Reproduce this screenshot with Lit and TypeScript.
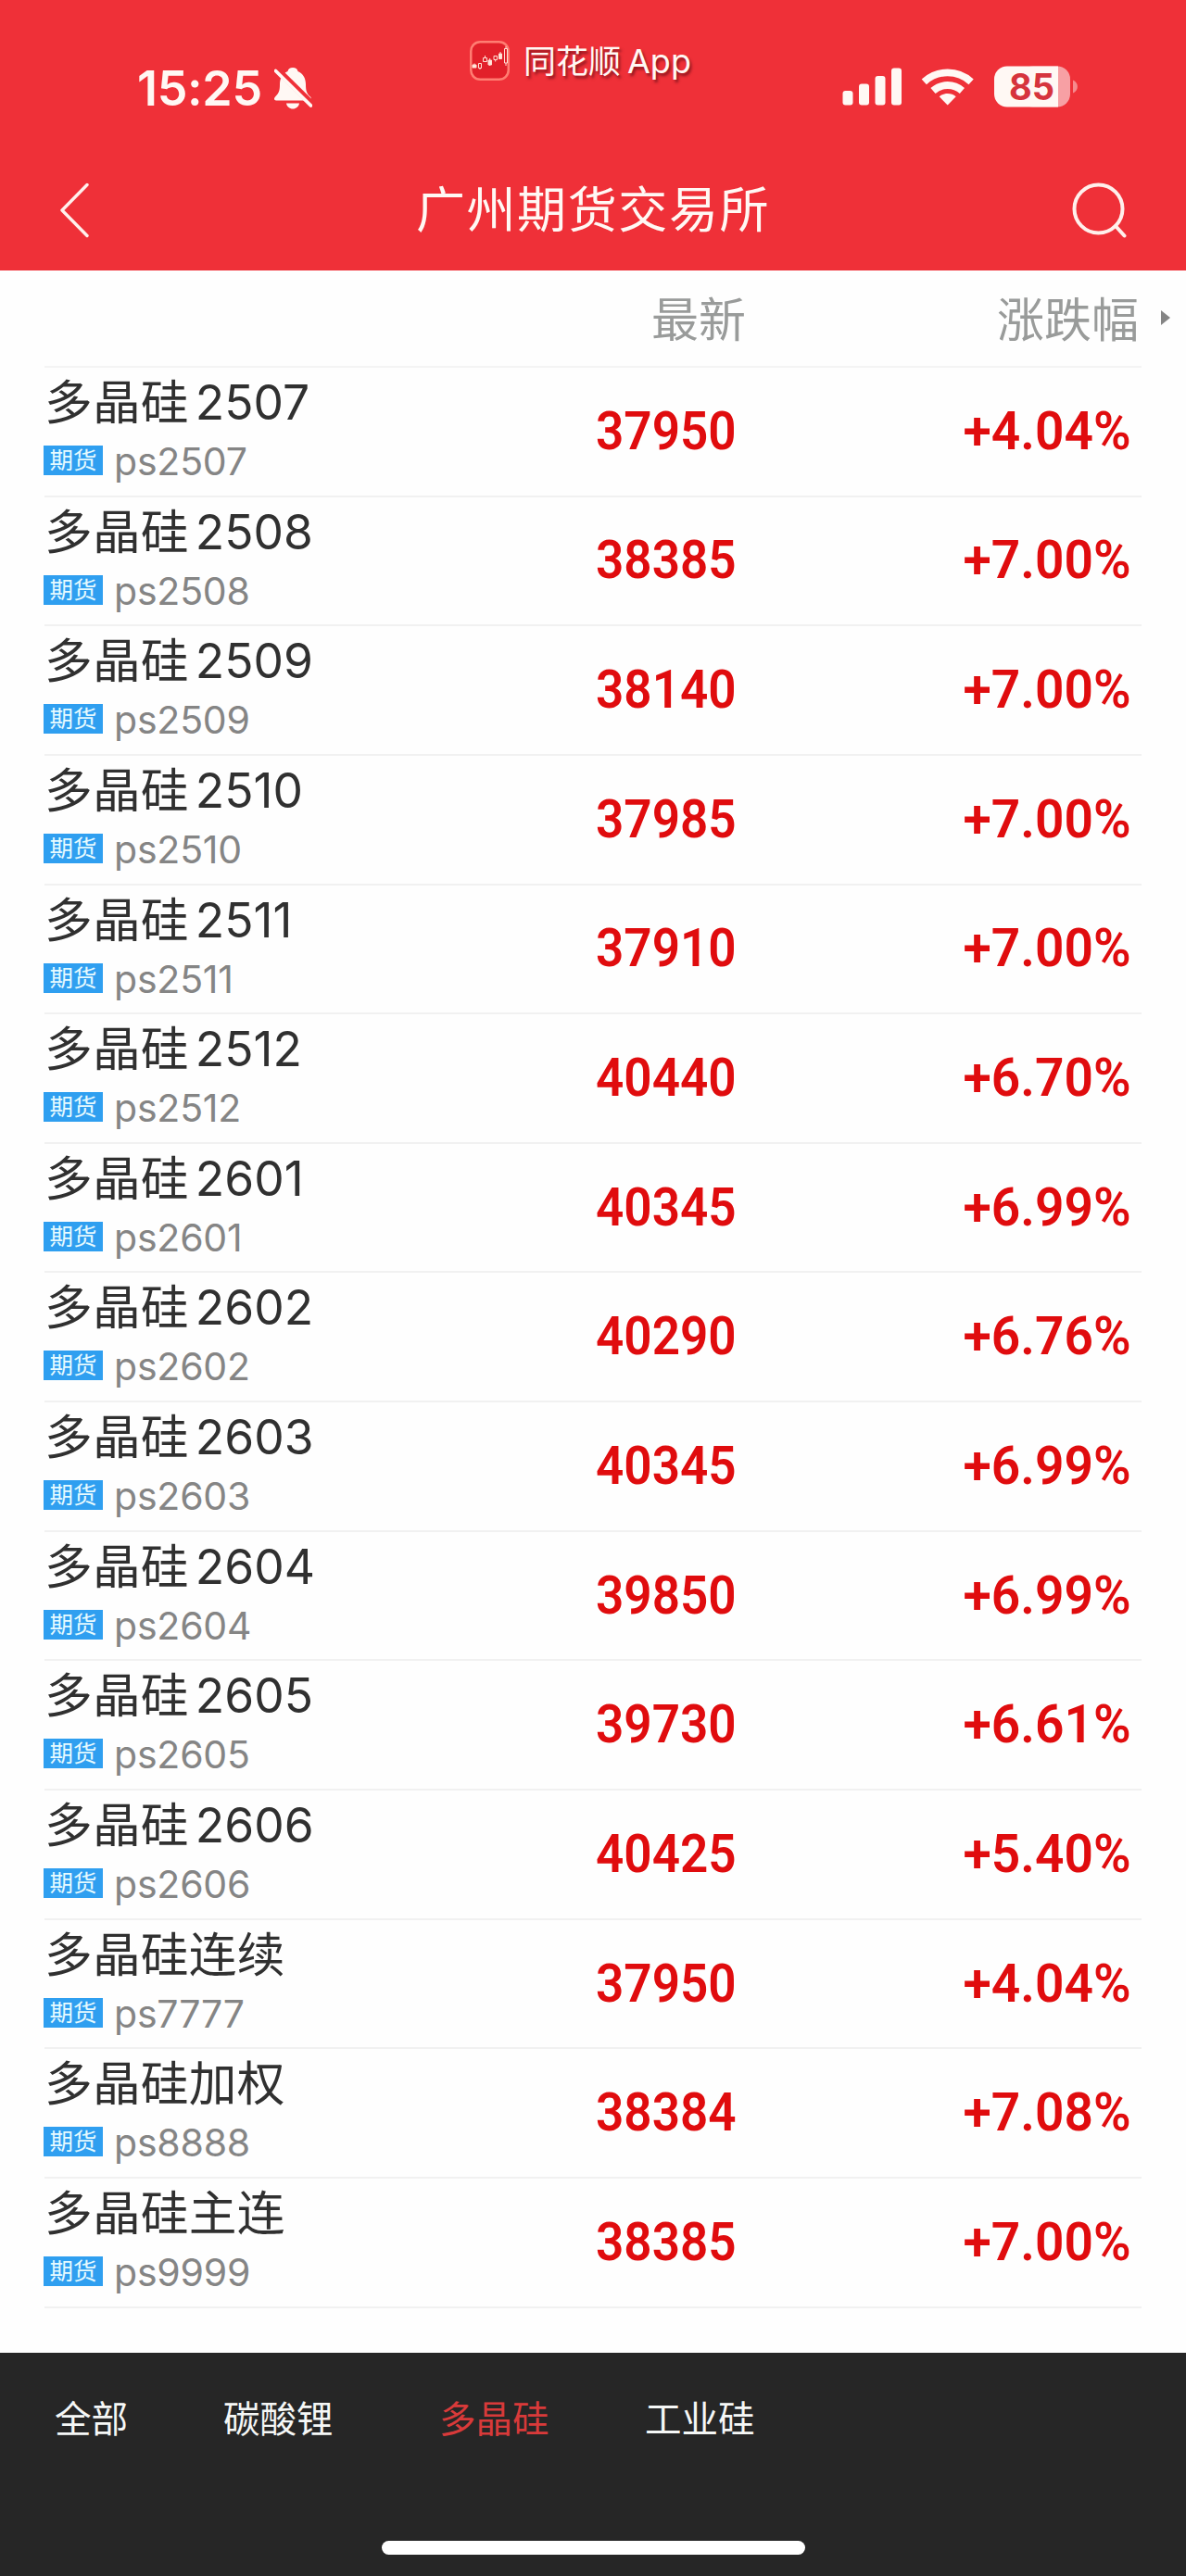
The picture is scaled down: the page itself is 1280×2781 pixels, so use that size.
import { LitElement, html, css } from "lit";
import { customElement, property } from "lit/decorators.js";

interface Quote {
  name: string;
  month: string;
  code: string;
  price: string;
  change: string;
}

const q = (month: string, price: string, change: string): Quote => ({
  name: "多晶硅",
  month,
  code: "ps" + month,
  price,
  change,
});

const QUOTES: Quote[] = [
  q("2507", "37950", "+4.04%"),
  q("2508", "38385", "+7.00%"),
  q("2509", "38140", "+7.00%"),
  q("2510", "37985", "+7.00%"),
  q("2511", "37910", "+7.00%"),
  q("2512", "40440", "+6.70%"),
  q("2601", "40345", "+6.99%"),
  q("2602", "40290", "+6.76%"),
  q("2603", "40345", "+6.99%"),
  q("2604", "39850", "+6.99%"),
  q("2605", "39730", "+6.61%"),
  q("2606", "40425", "+5.40%"),
  { name: "多晶硅连续", month: "", code: "ps7777", price: "37950", change: "+4.04%" },
  { name: "多晶硅加权", month: "", code: "ps8888", price: "38384", change: "+7.08%" },
  { name: "多晶硅主连", month: "", code: "ps9999", price: "38385", change: "+7.00%" },
];

@customElement("status-bar")
class StatusBar extends LitElement {
  static styles = css`
    :host {
      display: grid;
      grid-template-columns: 507px 1fr 372px;
      height: 165px;
      color: #fff8f4;
      font-family: Inter, "Noto Sans CJK SC", sans-serif;
    }
    .left {
      display: flex;
      align-items: flex-start;
      padding: 65px 0 0 148px;
    }
    .time {
      width: 148px;
      font-size: 52px;
      line-height: 62px;
      font-weight: 600;
      letter-spacing: -0.3px;
      white-space: nowrap;
    }
    .bell {
      margin-top: 8px;
      flex: none;
    }
    .app {
      display: flex;
      align-items: flex-start;
      padding-top: 44px;
    }
    .label {
      display: flex;
      align-items: baseline;
      gap: 7px;
      margin: 2px 0 0 15px;
      font-size: 36px;
      line-height: 36px;
      text-shadow: 2px 3px 3px rgba(90, 10, 20, 0.65);
      white-space: nowrap;
    }
    .cjk {
      font-family: "Noto Sans CJK SC", sans-serif;
      font-size: 35px;
    }
    .right {
      padding-top: 70px;
    }
    svg {
      display: block;
    }
    .pct {
      font: 700 39px Inter, sans-serif;
    }
  `;
  render() {
    return html`
      <div class="left">
        <div class="time">15:25</div>
        <svg class="bell" width="41" height="45" viewBox="0 0 41 45">
          <path fill="#fff8f4" d="M20 0c3 0 5 1.600 5.500 4C31 6.500 34 11.500 34 18c0 7 1 10 5 13.500 1.500 1.500 1.500 4-.500 4H2c-2.500 0-2.500-2.500-1-4C5 27.500 6 25 6 18 6 11.500 9 6.500 14.500 4 15 1.600 17 0 20 0Z" />
          <path fill="#fff8f4" d="M13 38.500h14c-.500 3.500-3.500 6-7 6s-6.500-2.500-7-6Z" />
          <path d="M3 2 42 40.500" stroke="#ef3038" stroke-width="7" />
          <path d="M1.500 3.500 39.500 41" stroke="#fff8f4" stroke-width="3.800" stroke-linecap="round" />
        </svg>
      </div>
      <div class="app">
        <svg width="43" height="43" viewBox="0 0 43 43">
          <rect x="1.250" y="1.250" width="40.500" height="40.500" rx="10" fill="#e2202a" stroke="#ff7d72" stroke-width="2.500" />
          <g fill="#ffe9df" stroke="#ffe0d4" stroke-width="1">
            <path d="M3 26h4v3H3zM5 24.500v2M20 21h3.500v5H20zM21.700 19v8M31.500 14h3v5.500h-3zM33 12v8" />
            <path fill="none" d="M9.500 24.500h3v5h-3zM11 29v2M14.500 18.500h4v4h-4zM16.500 16v2M26 16.500h3.500v4H26zM27.700 20v2.500M37.500 8.500h3V24h-3zM39 6v2M39 24v3" />
          </g>
        </svg>
        <div class="label"><span class="cjk">同花顺</span><span>App</span></div>
      </div>
      <svg class="right" width="272" height="50" viewBox="907 70 272 50">
        <g fill="#fff8f4">
          <rect x="908.500" y="98" width="11" height="15.500" rx="3" />
          <rect x="926" y="90.500" width="11" height="23" rx="3" />
          <rect x="943.500" y="82" width="11" height="31.500" rx="3" />
          <rect x="961" y="73.500" width="11" height="40" rx="3" />
          <path d="M1021.700 113.500 1012.700 104.300c5-4.300 13-4.300 18 0Z" />
        </g>
        <g fill="none" stroke="#fff8f4" stroke-width="7.800">
          <path d="M1006 98c9-8 22.400-8 31.400 0" />
          <path d="M996.300 88.300c14.500-13.200 36.300-13.200 50.800 0" />
        </g>
        <rect x="1100" y="71.500" width="54" height="44" rx="14" fill="#f7a0a4" />
        <path fill="#fff8f4" d="M1141 71.500h-55a14 14 0 0 0-14 14v16a14 14 0 0 0 14 14h55Z" />
        <path fill="#f58a8e" d="M1157 86.500c6.500 2.500 6.500 11.500 0 14Z" />
        <text class="pct" x="1088" y="108" textLength="49" lengthAdjust="spacingAndGlyphs" fill="#d6343d">85</text>
      </svg>
    `;
  }
}

@customElement("nav-bar")
class NavBar extends LitElement {
  static styles = css`
    :host {
      display: flex;
      justify-content: space-between;
      align-items: center;
      height: 127px;
      padding: 0 64px 0 63px;
      color: #fff8f4;
      font-family: "Noto Sans CJK SC", sans-serif;
    }
    .title {
      font-size: 53px;
      line-height: 60px;
      letter-spacing: 1.600px;
      margin-left: 27px;
      margin-bottom: 11px;
    }
    svg {
      display: block;
      margin-bottom: 4px;
    }
  `;
  render() {
    return html`
      <svg width="34" height="60" viewBox="0 0 34 60" fill="none" stroke="#fff0ec" stroke-width="3.400" stroke-linecap="round" stroke-linejoin="round">
        <path d="M31 2.500 4 30l27 27.500" />
      </svg>
      <div class="title">广州期货交易所</div>
      <svg width="60" height="60" viewBox="0 0 60 60" fill="none" stroke="#fff0ec" stroke-width="4" stroke-linecap="round">
        <circle cx="29.500" cy="28.500" r="26" />
        <path d="m48 47 9.500 10.500" />
      </svg>
    `;
  }
}

@customElement("quote-row")
class QuoteRow extends LitElement {
  @property({ attribute: false }) quote!: Quote;
  static styles = css`
    :host {
      display: grid;
      grid-template-columns: 500px 342px 1fr;
      height: 139.650px;
      box-sizing: border-box;
      border-bottom: 2px solid #f1f1f1;
      font-family: Inter, sans-serif;
      white-space: nowrap;
    }
    .name {
      display: flex;
      align-items: baseline;
      gap: 7px;
      height: 76px;
      padding: 8px 0 0 0;
      box-sizing: border-box;
      font-size: 51.500px;
      line-height: 51px;
      color: #303030;
    }
    .cjk {
      font-family: "Noto Sans CJK SC", sans-serif;
      font-size: 51.700px;
      letter-spacing: 0.250px;
    }
    .meta {
      display: flex;
      align-items: center;
      gap: 12px;
      margin: 8px 0 0 -1px;
      height: 32px;
    }
    .badge {
      width: 64px;
      height: 32px;
      background: #2f9ff0;
      color: #e6faff;
      font: 25.500px/28px "Noto Sans CJK SC", sans-serif;
      text-align: center;
    }
    .code {
      font-size: 41px;
      line-height: 48px;
      margin-top: 2px;
      color: #858585;
      letter-spacing: -0.200px;
    }
    .num {
      display: flex;
      align-items: center;
      padding-bottom: 2px;
      justify-content: center;
      font-family: Roboto, sans-serif;
      font-weight: 600;
      font-size: 58px;
      line-height: 60px;
      color: #e00c0e;
    }
    .num span {
      transform: scaleX(0.915);
    }
    .change {
      justify-content: flex-end;
      padding-right: 11px;
    }
    .change span {
      transform-origin: 100% 50%;
      transform: scaleX(0.95);
    }
  `;
  render() {
    const r = this.quote;
    return html`
      <div>
        <div class="name"><span class="cjk">${r.name}</span>${r.month ? html`<span>${r.month}</span>` : ""}</div>
        <div class="meta"><span class="badge">期货</span><span class="code">${r.code}</span></div>
      </div>
      <div class="num price"><span>${r.price}</span></div>
      <div class="num change"><span>${r.change}</span></div>
    `;
  }
}

@customElement("exchange-tabs")
class ExchangeTabs extends LitElement {
  static styles = css`
    :host {
      display: flex;
      flex-direction: column;
      justify-content: space-between;
      align-items: center;
      height: 241px;
      padding-bottom: 23px;
      box-sizing: border-box;
      background: #262626;
    }
    .tabs {
      align-self: stretch;
      display: grid;
      grid-template-columns: 182px 233px 222px 1fr;
      padding: 49px 0 0 59px;
      font: 39.500px/40px "Noto Sans CJK SC", sans-serif;
      color: #f5f7f6;
    }
    .active {
      color: #d83a3a;
    }
    .home {
      width: 457px;
      height: 15px;
      border-radius: 8px;
      background: #fff;
    }
  `;
  render() {
    return html`
      <div class="tabs">
        <span>全部</span><span>碳酸锂</span><span class="active">多晶硅</span><span>工业硅</span>
      </div>
      <div class="home"></div>
    `;
  }
}

@customElement("app-root")
class AppRoot extends LitElement {
  static styles = css`
    :host {
      display: flex;
      flex-direction: column;
      width: 1280px;
      height: 2781px;
      overflow: hidden;
      background: #fefefe;
    }
    .top {
      height: 292px;
      background: #ef3038;
    }
    .columns {
      display: flex;
      align-items: center;
      height: 105px;
      box-sizing: border-box;
      padding: 0 17px 5px 703px;
      font: 400 51px/56px "Noto Sans CJK SC", sans-serif;
      color: #999b9a;
    }
    .rate {
      margin-left: auto;
      margin-right: 24px;
    }
    .columns svg {
      margin-top: 2px;
    }
    .list {
      flex: 1;
      margin: 0 48px;
    }
    .rule {
      height: 2px;
      margin-top: -2px;
      background: #f4f4f4;
    }
  `;
  render() {
    return html`
      <div class="top">
        <status-bar></status-bar>
        <nav-bar></nav-bar>
      </div>
      <div class="columns">
        <span>最新</span>
        <span class="rate">涨跌幅</span>
        <svg width="10" height="16" viewBox="0 0 10 16"><path fill="#858585" d="M0 0 10 8 0 16Z" /></svg>
      </div>
      <div class="list">
        <div class="rule"></div>
        ${QUOTES.map((r) => html`<quote-row .quote=${r}></quote-row>`)}
      </div>
      <exchange-tabs></exchange-tabs>
    `;
  }
}
